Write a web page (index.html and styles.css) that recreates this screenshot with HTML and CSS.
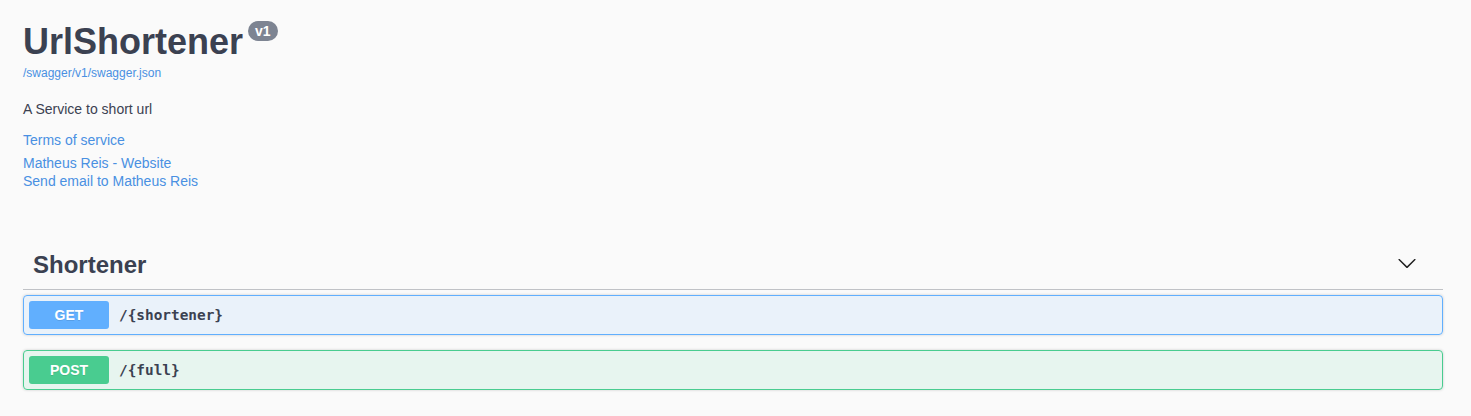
FILE: index.html
```html
<!DOCTYPE html>
<html lang="en">
<head>
<meta charset="utf-8">
<title>Swagger UI</title>
<link rel="stylesheet" href="styles.css">
</head>
<body>
<div class="wrapper">
  <section class="info">
    <h2 class="title"><span class="title-text">UrlShortener</span><span class="version">v1</span></h2>
    <a class="base-url" href="#">/swagger/v1/swagger.json</a>
    <p class="description">A Service to short url</p>
    <a class="link terms" href="#">Terms of service</a>
    <div class="contact">
      <a class="link" href="#">Matheus Reis - Website</a>
      <a class="link" href="#">Send email to Matheus Reis</a>
    </div>
  </section>

  <section class="tag-section">
    <h3 class="tag">
      <span class="tag-name">Shortener</span>
      <svg class="chevron" width="20" height="20" viewBox="0 0 20 20" aria-hidden="true"><path d="M17.418 6.109c.272-.268.709-.268.979 0s.271.701 0 .969l-7.908 7.83c-.27.268-.707.268-.979 0l-7.908-7.830c-.27-.268-.27-.701 0-.969.271-.268.709-.268.979 0L10 13.25l7.418-7.141z"/></svg>
    </h3>
    <div class="opblock opblock-get">
      <div class="summary">
        <span class="method">GET</span>
        <span class="path">/{shortener}</span>
      </div>
    </div>
    <div class="opblock opblock-post">
      <div class="summary">
        <span class="method">POST</span>
        <span class="path">/{full}</span>
      </div>
    </div>
  </section>
</div>
</body>
</html>
```
FILE: styles.css
```css
html, body {
  margin: 0;
  padding: 0;
  background: #fafafa;
}
body {
  font-family: "Liberation Sans", Arial, sans-serif;
  color: #3b4151;
}
.wrapper {
  padding: 0 28px 0 23px;
}
.info {
  display: flex;
  flex-direction: column;
  align-items: flex-start;
  padding-top: 21px;
}
.title {
  display: flex;
  align-items: flex-start;
  margin: 0;
  font-size: 36px;
  line-height: 42px;
  font-weight: 700;
  color: #3b4151;
}
.version {
  margin-left: 5px;
  padding: 2px 7px;
  font-size: 14px;
  line-height: 16px;
  font-weight: 700;
  color: #fff;
  background: #7d8492;
  border-radius: 57px;
}
.base-url {
  display: block;
  margin-top: 3px;
  font-size: 12px;
  line-height: 14px;
  color: #4990e2;
  text-decoration: none;
}
.description {
  margin: 21px 0 0;
  font-size: 14px;
  line-height: 16px;
  color: #3b4151;
}
.link {
  display: block;
  font-size: 14px;
  color: #4990e2;
  text-decoration: none;
}
.terms {
  margin-top: 15px;
  line-height: 16px;
}
.contact {
  margin-top: 6px;
}
.contact .link {
  line-height: 18px;
}
.tag-section {
  margin-top: 51px;
}
.tag {
  display: flex;
  align-items: center;
  margin: 0 0 5px;
  padding: 10px 20px 10px 10px;
  border-bottom: 1px solid rgba(59, 65, 81, 0.3);
  font-size: 24px;
  line-height: 28px;
  font-weight: 700;
  color: #3b4151;
}
.tag-name {
  flex: 1;
}
.chevron {
  align-self: flex-start;
  margin-top: 2px;
  margin-right: 6px;
  fill: #1f1f1f;
}
.opblock {
  margin-bottom: 15px;
  border: 1px solid #000;
  border-radius: 4px;
  box-shadow: 0 0 3px rgba(0, 0, 0, 0.19);
}
.summary {
  display: flex;
  align-items: center;
  padding: 5px;
}
.method {
  min-width: 80px;
  box-sizing: border-box;
  padding: 6px 15px;
  font-size: 14px;
  line-height: 16px;
  font-weight: 700;
  text-align: center;
  color: #fff;
  border-radius: 3px;
  text-shadow: 0 1px 0 rgba(0, 0, 0, 0.1);
}
.path {
  padding: 0 10px;
  font-family: "DejaVu Sans Mono", "Liberation Mono", monospace;
  font-size: 14.4px;
  font-weight: 700;
  color: #3b4151;
}
.opblock-get {
  border-color: #61affe;
  background: rgba(97, 175, 254, 0.1);
}
.opblock-get .method {
  background: #61affe;
}
.opblock-post {
  border-color: #49cc90;
  background: rgba(73, 204, 144, 0.1);
}
.opblock-post .method {
  background: #49cc90;
}
```
